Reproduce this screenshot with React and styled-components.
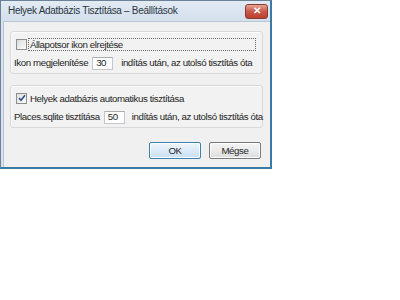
import React from "react";
import styled, { createGlobalStyle } from "styled-components";

const GlobalStyle = createGlobalStyle`
	html, body {
		margin: 0;
		padding: 0;
		background: #ffffff;
	}
	body {
		font-family: "Liberation Sans", Arial, sans-serif;
		font-size: 9.7px;
		line-height: 12px;
		letter-spacing: -0.4px;
		color: #1f1f1f;
	}
`;

const Window = styled.div`
	width: 272px;
	height: 169px;
	display: flex;
	flex-direction: column;
	box-sizing: border-box;
	border: 1px solid #6d8196;
	border-right: 2px solid #3a7ba5;
	border-bottom: 2px solid #3a7ba5;
	background: #d7e3ef;
`;

const TitleBar = styled.div`
	height: 20px;
	display: flex;
	align-items: center;
	justify-content: space-between;
	padding: 0 2px 0 7px;
	background: linear-gradient(#e3ebf4, #d3dfec);
`;

const Title = styled.span`
	font-size: 10px;
	letter-spacing: -0.3px;
	color: #2a3442;
	white-space: nowrap;
`;

const CloseButton = styled.div`
	width: 21px;
	height: 13px;
	display: flex;
	align-items: center;
	justify-content: center;
	border: 1px solid #8a3b30;
	border-radius: 3px;
	background: linear-gradient(#e8a595, #c9584a 50%, #bb3f31);
	color: #ffffff;
	font-size: 10px;
	font-weight: bold;
	line-height: 1;
`;

const Client = styled.div`
	flex: 1;
	margin: 0 0 0 2px;
	display: flex;
	flex-direction: column;
	gap: 11px;
	padding: 9px 7px 0 6px;
	background: #f0f0f0;
	border-top: 1px solid #b9c6d4;
	border-left: 1px solid #b9c6d4;
`;

const Group = styled.div`
	display: flex;
	flex-direction: column;
	gap: 5px;
	padding: 5px 6px 3px 3px;
	border: 1px solid #d9d9d9;
	border-radius: 3px;
	box-shadow: inset 1px 1px #fbfbfb;
	background: #f2f2f2;
`;

const Row = styled.div`
	display: flex;
	align-items: center;
	height: 14px;
	white-space: nowrap;
`;

const Text = styled.span`
	flex-shrink: 0;
`;

const Box = styled.span`
	width: 9px;
	height: 9px;
	margin: 0 1px 0 2px;
	display: flex;
	align-items: center;
	justify-content: center;
	border: 1px solid #8f8f8f;
	background: linear-gradient(135deg, #dcdcdc, #fdfdfd);
	box-sizing: content-box;
	flex-shrink: 0;
`;

const CheckLabel = styled.span`
	flex: 1;
	padding: 0 1px;
	line-height: 11px;
	border: 1px dotted ${(p) => (p.focused ? "#6a6a6a" : "transparent")};
`;

const Field = styled.span`
	width: ${(p) => p.width}px;
	height: 13px;
	margin: 0 ${(p) => p.after}px 0 ${(p) => p.before}px;
	padding-left: 3px;
	box-sizing: border-box;
	display: flex;
	align-items: center;
	flex-shrink: 0;
	background: #ffffff;
	border: 1px solid #c3c6cc;
	border-top-color: #abadb3;
`;

const Footer = styled.div`
	display: flex;
	justify-content: flex-end;
	gap: 8px;
	margin-top: 3px;
	padding-right: 2px;
`;

const Button = styled.div`
	width: 52px;
	height: 17px;
	box-sizing: border-box;
	display: flex;
	align-items: center;
	justify-content: center;
	border-radius: 2px;
	border: 1px solid ${(p) => (p.primary ? "#3c7fb1" : "#7a7a7a")};
	background: ${(p) =>
		p.primary
			? "linear-gradient(#eef6fc, #dbeaf6 50%, #c9e0f3)"
			: "linear-gradient(#f4f4f4, #ebebeb 50%, #dcdcdc)"};
	box-shadow: inset 0 0 0 1px #fbfdff;
	color: #1f1f1f;
`;

function CheckIcon() {
	return (
		<svg width="8" height="8" viewBox="0 0 8 8">
			<path d="M1 4 L3 6.3 L7 1.2" fill="none" stroke="#2a4f86" strokeWidth="1.5" />
		</svg>
	);
}

export default function App() {
	return (
		<>
			<GlobalStyle />
			<Window>
				<TitleBar>
					<Title>Helyek Adatbázis Tisztítása – Beállítások</Title>
					<CloseButton>✕</CloseButton>
				</TitleBar>
				<Client>
					<Group>
						<Row>
							<Box />
							<CheckLabel focused>Állapotsor ikon elrejtése</CheckLabel>
						</Row>
						<Row>
							<Text>Ikon megjelenítése</Text>
							<Field width={21} before={4} after={8}>30</Field>
							<Text>indítás után, az utolsó tisztítás óta</Text>
						</Row>
					</Group>
					<Group>
						<Row>
							<Box>
								<CheckIcon />
							</Box>
							<CheckLabel>Helyek adatbázis automatikus tisztítása</CheckLabel>
						</Row>
						<Row>
							<Text>Places.sqlite tisztítása</Text>
							<Field width={21} before={4} after={7}>50</Field>
							<Text>indítás után, az utolsó tisztítás óta</Text>
						</Row>
					</Group>
					<Footer>
						<Button primary>OK</Button>
						<Button>Mégse</Button>
					</Footer>
				</Client>
			</Window>
		</>
	);
}
